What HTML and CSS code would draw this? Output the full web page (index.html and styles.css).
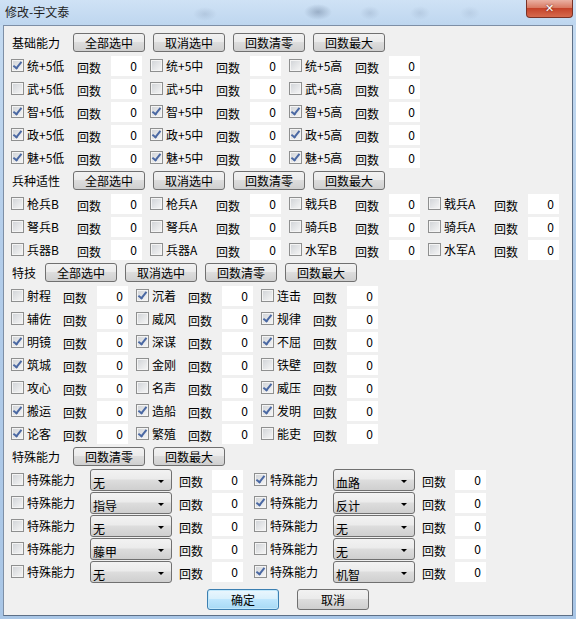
FILE: index.html
```html
<html>
  <head>
    <link rel="stylesheet" href="styles.css">
  </head>
  <body>
    <div class="window">
      <div class="titlebar">
        <span class="caption">修改-宇文泰</span>
        <button class="close-btn">&#x2715;</button>
      </div>
      <div class="client">
        <!-- 基础能力 -->
        <div class="head">
          <span class="sec-title">基础能力</span>
          <button class="btn">全部选中</button>
          <button class="btn">取消选中</button>
          <button class="btn">回数清零</button>
          <button class="btn">回数最大</button>
        </div>
        <div class="row">
          <div class="item"><span class="cb on"></span><span class="lbl">统+5低</span><span class="cnt">回数</span><input class="num" value="0"></div>
          <div class="item"><span class="cb"></span><span class="lbl">统+5中</span><span class="cnt">回数</span><input class="num" value="0"></div>
          <div class="item"><span class="cb"></span><span class="lbl">统+5高</span><span class="cnt">回数</span><input class="num" value="0"></div>
        </div>
        <div class="row">
          <div class="item"><span class="cb"></span><span class="lbl">武+5低</span><span class="cnt">回数</span><input class="num" value="0"></div>
          <div class="item"><span class="cb"></span><span class="lbl">武+5中</span><span class="cnt">回数</span><input class="num" value="0"></div>
          <div class="item"><span class="cb"></span><span class="lbl">武+5高</span><span class="cnt">回数</span><input class="num" value="0"></div>
        </div>
        <div class="row">
          <div class="item"><span class="cb on"></span><span class="lbl">智+5低</span><span class="cnt">回数</span><input class="num" value="0"></div>
          <div class="item"><span class="cb on"></span><span class="lbl">智+5中</span><span class="cnt">回数</span><input class="num" value="0"></div>
          <div class="item"><span class="cb on"></span><span class="lbl">智+5高</span><span class="cnt">回数</span><input class="num" value="0"></div>
        </div>
        <div class="row">
          <div class="item"><span class="cb on"></span><span class="lbl">政+5低</span><span class="cnt">回数</span><input class="num" value="0"></div>
          <div class="item"><span class="cb on"></span><span class="lbl">政+5中</span><span class="cnt">回数</span><input class="num" value="0"></div>
          <div class="item"><span class="cb on"></span><span class="lbl">政+5高</span><span class="cnt">回数</span><input class="num" value="0"></div>
        </div>
        <div class="row">
          <div class="item"><span class="cb on"></span><span class="lbl">魅+5低</span><span class="cnt">回数</span><input class="num" value="0"></div>
          <div class="item"><span class="cb on"></span><span class="lbl">魅+5中</span><span class="cnt">回数</span><input class="num" value="0"></div>
          <div class="item"><span class="cb on"></span><span class="lbl">魅+5高</span><span class="cnt">回数</span><input class="num" value="0"></div>
        </div>

        <!-- 兵种适性 -->
        <div class="head">
          <span class="sec-title">兵种适性</span>
          <button class="btn">全部选中</button>
          <button class="btn">取消选中</button>
          <button class="btn">回数清零</button>
          <button class="btn">回数最大</button>
        </div>
        <div class="row">
          <div class="item"><span class="cb"></span><span class="lbl">枪兵B</span><span class="cnt">回数</span><input class="num" value="0"></div>
          <div class="item"><span class="cb"></span><span class="lbl">枪兵A</span><span class="cnt">回数</span><input class="num" value="0"></div>
          <div class="item"><span class="cb"></span><span class="lbl">戟兵B</span><span class="cnt">回数</span><input class="num" value="0"></div>
          <div class="item"><span class="cb"></span><span class="lbl">戟兵A</span><span class="cnt">回数</span><input class="num" value="0"></div>
        </div>
        <div class="row">
          <div class="item"><span class="cb"></span><span class="lbl">弩兵B</span><span class="cnt">回数</span><input class="num" value="0"></div>
          <div class="item"><span class="cb"></span><span class="lbl">弩兵A</span><span class="cnt">回数</span><input class="num" value="0"></div>
          <div class="item"><span class="cb"></span><span class="lbl">骑兵B</span><span class="cnt">回数</span><input class="num" value="0"></div>
          <div class="item"><span class="cb"></span><span class="lbl">骑兵A</span><span class="cnt">回数</span><input class="num" value="0"></div>
        </div>
        <div class="row">
          <div class="item"><span class="cb"></span><span class="lbl">兵器B</span><span class="cnt">回数</span><input class="num" value="0"></div>
          <div class="item"><span class="cb"></span><span class="lbl">兵器A</span><span class="cnt">回数</span><input class="num" value="0"></div>
          <div class="item"><span class="cb"></span><span class="lbl">水军B</span><span class="cnt">回数</span><input class="num" value="0"></div>
          <div class="item"><span class="cb"></span><span class="lbl">水军A</span><span class="cnt">回数</span><input class="num" value="0"></div>
        </div>

        <!-- 特技 -->
        <div class="head">
          <span class="sec-title short">特技</span>
          <button class="btn">全部选中</button>
          <button class="btn">取消选中</button>
          <button class="btn">回数清零</button>
          <button class="btn">回数最大</button>
        </div>
        <div class="row skills">
          <div class="item"><span class="cb"></span><span class="lbl">射程</span><span class="cnt">回数</span><input class="num" value="0"></div>
          <div class="item"><span class="cb on"></span><span class="lbl">沉着</span><span class="cnt">回数</span><input class="num" value="0"></div>
          <div class="item"><span class="cb"></span><span class="lbl">连击</span><span class="cnt">回数</span><input class="num" value="0"></div>
        </div>
        <div class="row skills">
          <div class="item"><span class="cb"></span><span class="lbl">辅佐</span><span class="cnt">回数</span><input class="num" value="0"></div>
          <div class="item"><span class="cb"></span><span class="lbl">威风</span><span class="cnt">回数</span><input class="num" value="0"></div>
          <div class="item"><span class="cb on"></span><span class="lbl">规律</span><span class="cnt">回数</span><input class="num" value="0"></div>
        </div>
        <div class="row skills">
          <div class="item"><span class="cb on"></span><span class="lbl">明镜</span><span class="cnt">回数</span><input class="num" value="0"></div>
          <div class="item"><span class="cb on"></span><span class="lbl">深谋</span><span class="cnt">回数</span><input class="num" value="0"></div>
          <div class="item"><span class="cb on"></span><span class="lbl">不屈</span><span class="cnt">回数</span><input class="num" value="0"></div>
        </div>
        <div class="row skills">
          <div class="item"><span class="cb on"></span><span class="lbl">筑城</span><span class="cnt">回数</span><input class="num" value="0"></div>
          <div class="item"><span class="cb"></span><span class="lbl">金刚</span><span class="cnt">回数</span><input class="num" value="0"></div>
          <div class="item"><span class="cb"></span><span class="lbl">铁壁</span><span class="cnt">回数</span><input class="num" value="0"></div>
        </div>
        <div class="row skills">
          <div class="item"><span class="cb"></span><span class="lbl">攻心</span><span class="cnt">回数</span><input class="num" value="0"></div>
          <div class="item"><span class="cb"></span><span class="lbl">名声</span><span class="cnt">回数</span><input class="num" value="0"></div>
          <div class="item"><span class="cb on"></span><span class="lbl">威压</span><span class="cnt">回数</span><input class="num" value="0"></div>
        </div>
        <div class="row skills">
          <div class="item"><span class="cb on"></span><span class="lbl">搬运</span><span class="cnt">回数</span><input class="num" value="0"></div>
          <div class="item"><span class="cb on"></span><span class="lbl">造船</span><span class="cnt">回数</span><input class="num" value="0"></div>
          <div class="item"><span class="cb on"></span><span class="lbl">发明</span><span class="cnt">回数</span><input class="num" value="0"></div>
        </div>
        <div class="row skills">
          <div class="item"><span class="cb on"></span><span class="lbl">论客</span><span class="cnt">回数</span><input class="num" value="0"></div>
          <div class="item"><span class="cb on"></span><span class="lbl">繁殖</span><span class="cnt">回数</span><input class="num" value="0"></div>
          <div class="item"><span class="cb"></span><span class="lbl">能吏</span><span class="cnt">回数</span><input class="num" value="0"></div>
        </div>

        <!-- 特殊能力 -->
        <div class="head">
          <span class="sec-title">特殊能力</span>
          <button class="btn">回数清零</button>
          <button class="btn">回数最大</button>
        </div>
        <div class="row special">
          <div class="item"><span class="cb"></span><span class="lbl">特殊能力</span><div class="combo">无</div><span class="cnt">回数</span><input class="num" value="0"></div>
          <div class="item"><span class="cb on"></span><span class="lbl">特殊能力</span><div class="combo">血路</div><span class="cnt">回数</span><input class="num" value="0"></div>
        </div>
        <div class="row special">
          <div class="item"><span class="cb"></span><span class="lbl">特殊能力</span><div class="combo">指导</div><span class="cnt">回数</span><input class="num" value="0"></div>
          <div class="item"><span class="cb on"></span><span class="lbl">特殊能力</span><div class="combo">反计</div><span class="cnt">回数</span><input class="num" value="0"></div>
        </div>
        <div class="row special">
          <div class="item"><span class="cb"></span><span class="lbl">特殊能力</span><div class="combo">无</div><span class="cnt">回数</span><input class="num" value="0"></div>
          <div class="item"><span class="cb"></span><span class="lbl">特殊能力</span><div class="combo">无</div><span class="cnt">回数</span><input class="num" value="0"></div>
        </div>
        <div class="row special">
          <div class="item"><span class="cb"></span><span class="lbl">特殊能力</span><div class="combo">藤甲</div><span class="cnt">回数</span><input class="num" value="0"></div>
          <div class="item"><span class="cb"></span><span class="lbl">特殊能力</span><div class="combo">无</div><span class="cnt">回数</span><input class="num" value="0"></div>
        </div>
        <div class="row special">
          <div class="item"><span class="cb"></span><span class="lbl">特殊能力</span><div class="combo">无</div><span class="cnt">回数</span><input class="num" value="0"></div>
          <div class="item"><span class="cb on"></span><span class="lbl">特殊能力</span><div class="combo">机智</div><span class="cnt">回数</span><input class="num" value="0"></div>
        </div>

        <div class="footer">
          <button class="btn default">确定</button>
          <button class="btn">取消</button>
        </div>
      </div>
    </div>
  </body>
</html>
```

FILE: styles.css
```css
body {
  margin: 0;
  font: 12px "Noto Sans CJK SC", "Microsoft YaHei", sans-serif;
  color: #000;
}
.window {
  width: 576px;
  height: 619px;
  display: flex;
  flex-direction: column;
  background: linear-gradient(#c6dcf2, #b3cdea 40%, #a9c6e6);
}
.titlebar {
  height: 25px;
  position: relative;
  background:
    radial-gradient(ellipse 14px 8px at 318px 12px, rgba(70,90,120,0.35), transparent),
    radial-gradient(ellipse 12px 7px at 205px 14px, rgba(90,110,140,0.18), transparent),
    radial-gradient(ellipse 10px 7px at 370px 13px, rgba(90,110,140,0.18), transparent),
    radial-gradient(ellipse 10px 7px at 420px 13px, rgba(90,110,140,0.15), transparent),
    radial-gradient(ellipse 10px 7px at 470px 13px, rgba(90,110,140,0.12), transparent),
    linear-gradient(#cfe2f5, #bed6ef);
}
.caption {
  position: absolute;
  left: 5px;
  top: 4px;
  font-size: 12px;
  line-height: 16px;
  color: #1e1e1e;
}
.close-btn {
  position: absolute;
  right: 3px;
  top: 0;
  width: 47px;
  height: 18px;
  padding: 0;
  border: 1px solid #7a3226;
  border-top: none;
  border-radius: 0 0 4px 4px;
  background: linear-gradient(#eab1a3, #d97a63 45%, #c5432a 50%, #d66a4d);
  color: #fff;
  font: bold 11px "DejaVu Sans", sans-serif;
  line-height: 17px;
  text-shadow: 0 0 2px #5a1a10;
}
.client {
  flex: 1;
  margin: 0 3px 3px 3px;
  border: 1px solid #7d8fa6;
  border-right-color: #5d6f86;
  border-bottom-color: #5d6f86;
  background: #f0f0f0;
  padding: 5px 0 0 7px;
}
.head, .row {
  display: flex;
  align-items: center;
  height: 23px;
}
.sec-title {
  width: 61px;
  margin-left: 1px;
}
.sec-title.short {
  width: 33px;
}
.btn {
  width: 72px;
  height: 19px;
  box-sizing: border-box;
  margin-right: 8px;
  padding: 0;
  border: 1px solid #707070;
  border-radius: 3px;
  background: linear-gradient(#f2f2f2, #ebebeb 45%, #dddddd 50%, #cfcfcf);
  font: inherit;
  line-height: 17px;
  color: #000;
}
.item {
  display: flex;
  align-items: center;
  width: 139px;
  flex: none;
}
.cb {
  position: relative;
  width: 13px;
  height: 13px;
  box-sizing: border-box;
  flex: none;
  border: 1px solid #8e8f8f;
  box-shadow: inset 0 0 0 1px #f4f4f4;
  background: linear-gradient(135deg, #cfd2d6, #f7f7f7);
}
.cb.on::after {
  content: "";
  position: absolute;
  left: 3px;
  top: 0px;
  width: 3px;
  height: 7px;
  border: solid #4a68a3;
  border-width: 0 2px 2px 0;
  transform: rotate(38deg);
}
.lbl {
  width: 50px;
  margin-left: 3px;
  white-space: nowrap;
}
.cnt {
  width: 34px;
  padding-top: 4px;
}
.num {
  width: 31px;
  height: 20px;
  box-sizing: border-box;
  border: none;
  background: #fff;
  padding: 0 5px 0 0;
  text-align: right;
  font: inherit;
  color: #000;
}
.skills .item {
  width: 125px;
}
.skills .lbl {
  width: 36px;
}
.special .item {
  width: 243px;
}
.special .lbl {
  width: 63px;
}
.special .cnt {
  width: 33px;
  margin-left: 7px;
}
.combo {
  position: relative;
  width: 82px;
  height: 22px;
  box-sizing: border-box;
  border: 1px solid #707070;
  border-radius: 3px;
  background: linear-gradient(#f2f2f2, #ebebeb 45%, #dddddd 50%, #cfcfcf);
  padding: 4px 0 0 2px;
  line-height: 18px;
}
.combo::after {
  content: "";
  position: absolute;
  right: 7px;
  top: 10px;
  border-left: 3px solid transparent;
  border-right: 3px solid transparent;
  border-top: 3px solid #000;
}
.footer {
  display: flex;
  justify-content: center;
  gap: 18px;
  margin-top: 6px;
  padding-right: 7px;
}
.footer .btn {
  height: 21px;
  margin-right: 0;
  line-height: 19px;
}
.btn.default {
  border-color: #3c7fb1;
  background: linear-gradient(#eaf6fd, #d9f0fc 45%, #bee6fd 50%, #a7d9f5);
  box-shadow: inset 0 0 0 1px #c2e8fb;
}
```
